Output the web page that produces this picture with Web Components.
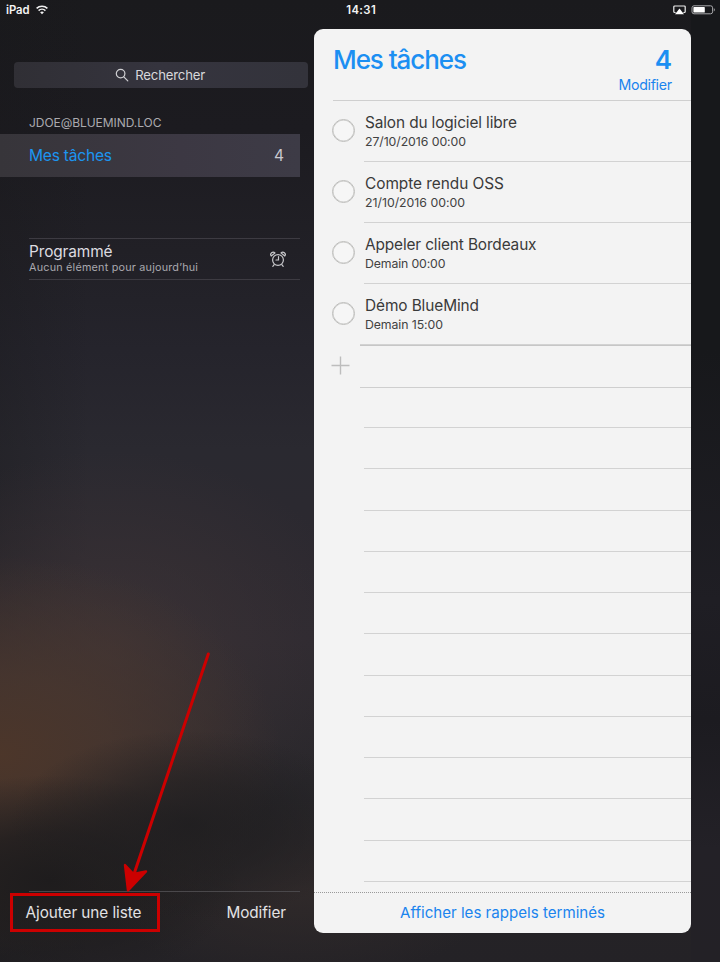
<!DOCTYPE html>
<html lang="fr">
<head>
<meta charset="utf-8">
<title>Rappels</title>
<style>
html, body { margin: 0; height: 100%; }
body { font-family: Inter, "Liberation Sans", sans-serif; background: #1b1b1e; overflow: hidden; }
</style>
</head>
<body>
<reminders-app></reminders-app>
<script>
const define = (name, html, setup) => {
  const tpl = document.createElement('template');
  tpl.innerHTML = html;
  customElements.define(name, class extends HTMLElement {
    constructor() {
      super();
      this.attachShadow({ mode: 'open' }).append(tpl.content.cloneNode(true));
    }
    connectedCallback() { if (setup) setup.call(this, this.shadowRoot); }
  });
};

/* One line of text, tracked so that it fills the width given in "fit". */
define('ui-label', `
<style>
:host { display: block; white-space: nowrap; }
span { display: inline-block; }
</style><span><slot></slot></span>`, function (root) {
  const fit = parseFloat(this.getAttribute('fit'));
  if (!fit) return;
  const n = this.textContent.length;
  const span = root.querySelector('span');
  const s = (fit - span.getBoundingClientRect().width) / (n - 1);
  span.style.letterSpacing = s.toFixed(3) + 'px';
  span.style.marginRight = (-s).toFixed(3) + 'px';
});

define('status-bar', `
<style>
:host { display: grid; position: relative; grid-template-columns: 1fr auto 1fr; align-items: center; height: 20px; padding: 0 4px 0 6px; color: #f4f4f4; font-size: 11.3px; font-weight: 600; line-height: 20px; box-sizing: border-box; }
.l { display: flex; align-items: center; gap: 6px; }
.r { display: flex; align-items: center; justify-content: flex-end; gap: 5px; }
svg { display: block; }
</style>
<div class="l"><ui-label fit="23.5">iPad</ui-label>
<svg width="12" height="10" viewBox="0 0 12 10" fill="none" stroke="#f2f2f2" stroke-width="1.5"><path d="M.6 3.4a7.7 7.7 0 0 1 10.8 0M2.6 5.6a4.9 4.9 0 0 1 6.8 0"/><path d="M6 9.3 4.1 7.3a2.8 2.8 0 0 1 3.8 0z" fill="#f2f2f2" stroke="none"/></svg></div>
<ui-label fit="29.5">14:31</ui-label>
<div class="r">
<svg width="13" height="10" viewBox="0 0 13 10"><path d="M2.6 7.5H1.7a.9.9 0 0 1-.9-.9V1.9A.9.9 0 0 1 1.7 1h9.6a.9.9 0 0 1 .9.9v4.7a.9.9 0 0 1-.9.9H10.4" fill="none" stroke="#eee" stroke-width="1.2"/><path d="M6.5 3.6 11 9.2H2z" fill="#fff"/></svg>
<svg width="25" height="10" viewBox="0 0 25 10"><rect x="1" y=".8" width="20.6" height="8" rx="2" fill="none" stroke="#a9a9ac" stroke-width="1"/><rect x="2.4" y="2.1" width="11.4" height="5.5" rx=".6" fill="#fff"/><path d="M22.8 3.2c1.3.4 1.3 2.8 0 3.2z" fill="#b5b5b7"/></svg>
</div>`);

define('search-field', `
<style>
:host { display: flex; align-items: center; justify-content: center; gap: 6px; height: 26px; border-radius: 4px; background: linear-gradient(90deg, #302f35, #35343e 50%, #33333b); color: #d8d8db; font-size: 13.2px; line-height: 26px; padding-right: 1px; box-sizing: border-box; }
svg { display: block; }
</style>
<svg width="14" height="14" viewBox="0 0 14 14" fill="none" stroke="#d0d0d3" stroke-width="1.2" stroke-linecap="round"><circle cx="5.6" cy="5.6" r="4.3"/><path d="m8.8 8.8 4 4"/></svg>
<ui-label fit="70">Rechercher</ui-label>`);

define('list-row', `
<style>
:host { display: flex; align-items: center; justify-content: space-between; height: 43px; padding: 0 16px 0 29px; box-sizing: border-box; background: linear-gradient(90deg, #37353a, #3c3843 60%, #3d3b46); font-size: 15.6px; color: #c9c8cf; }
.name { color: #1c95f0; }
</style>
<ui-label class="name" fit="83">Mes tâches</ui-label><span>4</span>`);

define('scheduled-row', `
<style>
:host { display: flex; align-items: center; justify-content: space-between; height: 42px; margin-left: 29px; padding-right: 14px; box-sizing: border-box; border-top: 1px solid #3d3b42; border-bottom: 1px solid #3d3b42; }
.t { font-size: 15.4px; line-height: 18px; color: #dddce0; }
.s { font-size: 10.8px; line-height: 14px; color: #aaa9af; }
svg { display: block; }
</style>
<div><ui-label class="t" fit="83.5">Programmé</ui-label><ui-label class="s" fit="169">Aucun élément pour aujourd’hui</ui-label></div>
<svg width="16" height="17" viewBox="0 0 16 17" fill="none" stroke="#c8c8cb" stroke-width="1.2" stroke-linecap="round"><circle cx="8" cy="9" r="5.4"/><path d="M8.5 5.5V9H6M4.2 13.6l-1.4 1.8M11.8 13.6l1.4 1.8"/><path d="M1.3 5A2 2 0 0 1 4.9 2zM14.7 5a2 2 0 0 0-3.6-3z"/></svg>`);

define('lists-sidebar', `
<style>
:host { display: flex; flex-direction: column; height: 942px; width: 314px; box-sizing: border-box; padding-top: 42px; }
search-field { margin: 0 6.5px 0 14px; flex: none; }
.acct { margin: 26px 0 0 29px; font-size: 12px; line-height: 18px; color: #abaaaf; }
list-row { margin: 2px 14px 0 0; }
scheduled-row { margin-top: 61px; margin-right: 14px; }
footer { display: flex; justify-content: space-between; margin: auto 14px 31px 29px; border-top: 1px solid #4a484b; height: 40px; line-height: 41px; padding-right: 14px; font-size: 15.3px; color: #e3e2e4; box-sizing: border-box; }
footer .a { margin-left: -3.5px; }
</style>
<search-field></search-field>
<ui-label class="acct" fit="132.5">JDOE@BLUEMIND.LOC</ui-label>
<list-row></list-row>
<scheduled-row></scheduled-row>
<footer><ui-label class="a" fit="116">Ajouter une liste</ui-label><ui-label fit="59.5">Modifier</ui-label></footer>`);

define('task-item', `
<style>
:host { display: flex; height: 61px; padding-left: 17.5px; gap: 10.5px; box-sizing: border-box; }
i { flex: none; width: 23px; height: 23px; margin-top: 18px; border: 1.5px solid #bdbdbb; border-radius: 50%; box-sizing: border-box; background: #f6f6f6; box-shadow: inset 0 0 0 .5px #c8c8c6; }
.b { flex: 1; margin-left: -1px; padding: 12px 0 0 1px; border-bottom: 1px solid #d2d2d2; box-sizing: border-box; }
.t { font-size: 15.4px; line-height: 20px; color: #3a3a3a; }
.d { font-size: 12.3px; line-height: 18px; color: #424242; }
:host([last]) .b { border-bottom: 0; }
</style>
<i></i><div class="b"><ui-label class="t"></ui-label><ui-label class="d"></ui-label></div>`, function (root) {
  for (const [cls, key] of [['t', 'name'], ['d', 'due']]) {
    const l = root.querySelector('.' + cls);
    const [text, fit] = this.getAttribute(key).split('|');
    l.textContent = text;
    l.setAttribute('fit', fit);
    l.replaceWith(l.cloneNode(true));
  }
});

define('task-card', `
<style>
:host { display: flex; flex-direction: column; width: 377px; height: 904px; background: #f3f3f3; border-radius: 9px; overflow: hidden; }
header { height: 72px; margin-left: 19px; padding: 16px 19px 0 0; border-bottom: 1px solid #cfcfcf; box-sizing: border-box; color: #1c8ff2; flex: none; }
.top { display: flex; justify-content: space-between; font-size: 26px; line-height: 30px; font-weight: 500; }
.n { font-size: 26px; font-weight: 600; }
.m { font-size: 14.2px; line-height: 19px; text-align: right; color: #1a84ee; }
.add { height: 43px; margin-left: 45.5px; border-bottom: 1px solid #cecece; box-sizing: border-box; flex: none; display: flex; box-shadow: 0 -1px #d2d2d2, inset 0 1px #c6c6c6; }
.add svg { display: block; margin: 11px 0 0 -29px; }
task-item { flex: none; }
.line { margin-left: 50px; height: 41.27px; border-bottom: 1px solid #d2d2d2; box-sizing: border-box; flex: none; }
.line.first { height: 40px; }
footer { margin-top: auto; height: 41px; border-top: 1px dotted #999; display: flex; justify-content: center; font-size: 15.1px; line-height: 40px; color: #1a84ee; box-sizing: border-box; flex: none; }
</style>
<header><div class="top"><ui-label fit="134">Mes tâches</ui-label><span class="n">4</span></div><ui-label class="m" fit="53.5">Modifier</ui-label></header>
<task-item name="Salon du logiciel libre|152" due="27/10/2016 00:00|101"></task-item>
<task-item name="Compte rendu OSS|139" due="21/10/2016 00:00|100"></task-item>
<task-item name="Appeler client Bordeaux|171.5" due="Demain 00:00|80.5"></task-item>
<task-item last name="Démo BlueMind|114" due="Demain 15:00|78"></task-item>
<div class="add"><svg width="19" height="19" viewBox="0 0 19 19" stroke="#bdbdbd" stroke-width="1.4"><path d="M9.5.5v18M.5 9.5h18"/></svg></div>
<div class="line first"></div>
<div class="lines"></div>
<footer><ui-label fit="205">Afficher les rappels terminés</ui-label></footer>`, function (root) {
  root.querySelector('.lines').innerHTML = '<div class="line"></div>'.repeat(11);
});

/* Arrow and frame that point at the "add a list" action. */
define('callout-mark', `
<style>
:host { position: absolute; left: 0; top: 0; width: 314px; height: 962px; pointer-events: none; }
svg { display: block; }
</style>
<svg width="314" height="962" viewBox="0 0 314 962"><rect x="11.5" y="894.5" width="147" height="36" fill="none" stroke="#c00" stroke-width="3"/><path d="M208.3 654 132 880" stroke="#c00" stroke-width="3" stroke-linecap="round"/><path d="M128 890.5 125 865 133.5 874 146 871.5z" fill="#c00" stroke="#c00" stroke-width="2.4" stroke-linejoin="round"/></svg>`);

define('reminders-app', `
<style>
:host { display: block; position: relative; width: 720px; height: 962px; overflow: hidden;
  background:
    radial-gradient(ellipse 180px 95px at 190px 825px, rgba(31,30,32,.9), rgba(31,30,32,.6) 45%, rgba(31,30,32,0) 100%),
    radial-gradient(ellipse 190px 105px at 50px 880px, rgba(30,28,29,1), rgba(30,28,29,.75) 45%, rgba(30,28,29,0) 100%),
    radial-gradient(ellipse 280px 200px at 0px 755px, rgba(78,55,42,.95), rgba(74,55,46,.8) 40%, rgba(64,50,48,0) 100%),
    radial-gradient(ellipse 260px 200px at 110px 650px, rgba(62,52,54,.8), rgba(56,46,51,0) 100%),
    radial-gradient(ellipse 200px 90px at 300px 890px, rgba(50,43,43,.8), rgba(50,43,43,0) 100%),
    linear-gradient(90deg, rgba(24,24,26,.3), rgba(24,24,26,0) 90px),
    linear-gradient(#1a1a1d 0, #1c1b20 130px, #212026 250px, #25242c 350px, #2a2930 450px, #2c2930 560px, #2e2a31 640px, #29272b 780px, #252326 900px, #242226 962px); }
:host::before { content: ""; position: absolute; right: 0; top: 0; width: 29px; height: 962px; background: linear-gradient(#17181b 0, #17181b 350px, #1f1e24 600px, #1c1b20 720px, #232127 850px, #232126 962px); }
main { display: flex; position: relative; }
task-card { margin-top: 9px; }
</style>
<status-bar></status-bar>
<main><lists-sidebar></lists-sidebar><task-card></task-card></main>
<callout-mark></callout-mark>`);
</script>
</body>
</html>
